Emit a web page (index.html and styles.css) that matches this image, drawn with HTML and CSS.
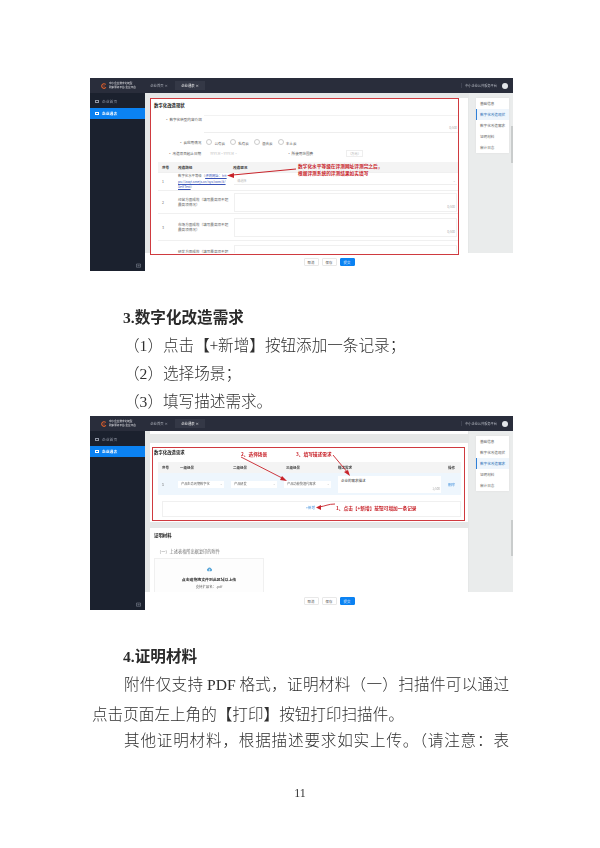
FILE: index.html
```html
<!DOCTYPE html>
<html lang="zh-CN">
<head>
<meta charset="utf-8">
<title>数字化改造需求</title>
<link rel="stylesheet" href="styles.css">
</head>
<body>
<main class="page">

<section class="shot">
  <header class="top">
    <div class="brand"><svg class="logo" viewBox="0 0 10 10"><circle cx="5" cy="5" r="3.8" fill="none" stroke="#e2602a" stroke-width="1.8" stroke-dasharray="17 7" transform="rotate(35 5 5)"/><circle cx="5" cy="5" r="1.2" fill="#b5452a"/></svg><div class="brand-t"><span>中小企业数字化转型</span><span>政策服务平台-企业平台</span></div></div>
    <div class="tab">企业首页 ×</div><div class="tab on">企业通表 ×</div>
    <div class="top-r">中小企业公共服务平台</div><div class="ava"></div>
  </header>
  <div class="body">
    <aside class="side">
      <div class="side-i"><span class="ic"></span>企业首页</div><div class="side-i on"><span class="ic"></span>企业通表</div>
      <div class="side-f"><svg class="ic-f" viewBox="0 0 10 10"><path d="M1 2H9V8.5H1ZM3 5.2H6.5M5.2 4 6.6 5.2 5.2 6.4" fill="none" stroke="#8f95a3"/></svg></div>
    </aside>
    <div class="work">
      <div class="canvas">
        <div class="scroll">
          <div class="card c1">
            <h3 class="ttl">数字化改造现状</h3>
            <div class="f-desc"><span class="lab">· 数字化转型内容介绍</span><div class="area"><span class="cnt">0/500</span></div></div>
            <div class="f-radio"><span class="lab">· 云应用情况</span><span class="rd">公有云</span><span class="rd">私有云</span><span class="rd">混合云</span><span class="rd">本土云</span></div>
            <div class="f-date"><span class="lab">· 改造项目起止日期</span><span class="dt">YYYY-M ~ YYYY-M ▫</span><span class="lab2">· 所使用范围费</span><span class="unit">（万元）</span></div>
            <div class="t1 thead"><span>序号</span><span>改造路径</span><span>改造现况</span></div>
            <div class="t1 r1"><span>1</span><span>数字化水平等级（<u>评测网址：htt ps://zxqt.smejs.cn/sys/com/#/ SelfTest</u>）</span><div class="sel">请选择<i>⌄</i></div></div>
            <div class="t1 r2"><span>2</span><span>经营方面成效（填写最高项不超最高项情况）</span><div class="area2"><span class="cnt">0/500</span></div></div>
            <div class="t1 r3"><span>3</span><span>市场方面成效（填写最高项不超最高项情况）</span><div class="area2"><span class="cnt">0/500</span></div></div>
            <div class="t1 r4"><span>4</span><span>研发方面成效（填写最高项不超最高项情况）</span><div class="area2"></div></div>
          </div>
        </div>
        <nav class="rail"><div class="toc"><a>基础信息</a><a class="on">数字化改造现状</a><a>数字化改造需求</a><a>证明材料</a><a>审计日志</a></div><div class="bar b1"></div></nav>
      </div>
      <footer class="foot"><button class="btn">取消</button><button class="btn">保存</button><button class="btn pri">提交</button></footer>
    </div>
  </div>
  <div class="red r-a"></div>
  <svg class="ann" viewBox="0 0 423 193"><path d="M206 91 140 97.2" stroke="#c8232a" stroke-width="1.1" fill="none"/><path d="M137 97.5 144 95 144 100Z" fill="#c8232a"/></svg>
  <div class="note n1">数字化水平等级在评测网址评测完之后，<br>根据评测系统的评测结果如实填写</div>
</section>

<h2 class="hd"><b>3.</b>数字化改造需求</h2>
<p class="ln">（<span class="la">1</span>）点击【+新增】按钮添加一条记录；</p>
<p class="ln">（<span class="la">2</span>）选择场景；</p>
<p class="ln">（<span class="la">3</span>）填写描述需求。</p>

<section class="shot s2">
  <header class="top">
    <div class="brand"><svg class="logo" viewBox="0 0 10 10"><circle cx="5" cy="5" r="3.8" fill="none" stroke="#e2602a" stroke-width="1.8" stroke-dasharray="17 7" transform="rotate(35 5 5)"/><circle cx="5" cy="5" r="1.2" fill="#b5452a"/></svg><div class="brand-t"><span>中小企业数字化转型</span><span>政策服务平台-企业平台</span></div></div>
    <div class="tab">企业首页 ×</div><div class="tab on">企业通表 ×</div>
    <div class="top-r">中小企业公共服务平台</div><div class="ava"></div>
  </header>
  <div class="body">
    <aside class="side">
      <div class="side-i"><span class="ic"></span>企业首页</div><div class="side-i on"><span class="ic"></span>企业通表</div>
      <div class="side-f"><svg class="ic-f" viewBox="0 0 10 10"><path d="M1 2H9V8.5H1ZM3 5.2H6.5M5.2 4 6.6 5.2 5.2 6.4" fill="none" stroke="#8f95a3"/></svg></div>
    </aside>
    <div class="work">
      <div class="canvas">
        <div class="scroll">
          <div class="stub"></div>
          <div class="card c2">
            <h3 class="ttl">数字化改造需求</h3>
            <div class="t2 thead"><span>序号</span><span>一级场景</span><span>二级场景</span><span>三级场景</span><span>描述需求</span><span>操作</span></div>
            <div class="t2 row"><span>1</span><div class="sel">产品生命周期数字化<i>⌄</i></div><div class="sel">产品研发<i>⌄</i></div><div class="sel">产品功能快速代需求<i>⌄</i></div><div class="ta">企业的需求描述<span class="cnt">1/500</span></div><span class="link">删除</span></div>
            <div class="addrow"><span class="link">+新增</span></div>
          </div>
          <div class="card c3">
            <h3 class="ttl">证明材料</h3>
            <p class="sub">（一）上述表格所出据复印的附件</p>
            <div class="upl">
              <svg class="upi" viewBox="0 0 10 10"><path d="M2.6 7.4A2 2 0 0 1 2.8 3.6 2.5 2.5 0 0 1 7.6 4 1.8 1.8 0 0 1 7.4 7.4Z" fill="#59a6d8"/><path d="M5 8V4.6M3.8 5.8 5 4.6 6.2 5.8" stroke="#fff" stroke-width=".7" fill="none"/></svg>
              <b>点击或拖拽文件到此区域以上传</b><span>支持扩展名：.pdf</span>
            </div>
          </div>
        </div>
        <nav class="rail"><div class="toc"><a>基础信息</a><a>数字化改造现状</a><a class="on">数字化改造需求</a><a>证明材料</a><a>审计日志</a></div><div class="bar b2"></div></nav>
      </div>
      <footer class="foot"><button class="btn">取消</button><button class="btn">保存</button><button class="btn pri">提交</button></footer>
    </div>
  </div>
  <div class="red r-b"></div>
  <svg class="ann" viewBox="0 0 423 194"><g stroke="#c8232a" stroke-width=".9" fill="none"><path d="M151 41 194 63"/><path d="M243 39 258 57"/><path d="M245 88C238 88 236 90 229 91"/></g><g fill="#c8232a"><path d="M197 65 190 64 192 60Z"/><path d="M260 60 254 56 258 54Z"/><path d="M226 91.5 231 89 231 94Z"/></g></svg>
  <div class="note n2">2、选择场景</div>
  <div class="note n3">3、填写描述需求</div>
  <div class="note n4">1、点击【+新增】按钮可增加一条记录</div>
</section>

<h2 class="hd after"><b>4.</b>证明材料</h2>
<p class="ln just">附件仅支持 <span class="la">PDF</span> 格式，证明材料（一）扫描件可以通过点击页面左上角的【打印】按钮打印扫描件。</p>
<p class="ln last">其他证明材料，根据描述要求如实上传。（请注意：表</p>
<div class="num">11</div>
</main>
</body>
</html>
```
FILE: styles.css
```css
* { box-sizing: border-box; }
html, body { margin: 0; padding: 0; background: #fff; }
body { font-family: "Noto Sans CJK SC", "Liberation Sans", sans-serif; color: #333; }
.page { width: 600px; height: 848px; padding: 78px 91px 0 92px; overflow: hidden; }

/* document text */
.hd, .ln { margin: 0; height: 28px; line-height: 28px; font-size: 15.6px; filter: blur(.25px); }
.hd { margin-top: 31px; margin-left: 31px; font-weight: 700; color: #2a2a2a; }
.hd b { font-family: "Liberation Serif", serif; }
.hd.after { margin-top: 31px; }
.ln { text-indent: 32px; font-weight: 300; color: #303030; }
.la { font-family: "Liberation Serif", serif; }
.just { height: 56px; text-align: justify; }
.last { text-align: justify; text-align-last: justify; }
.num { margin-top: 30px; margin-left: -1px; text-align: center; font: 12px/20px "Liberation Serif", serif; color: #333; filter: blur(.25px); }

/* screenshots */
.shot { position: relative; width: 423px; height: 193px; margin-left: -2px; display: flex; flex-direction: column; font-size: 4px; line-height: 5px; filter: blur(.45px); overflow: hidden; }
.s2 { height: 194px; margin-top: 2px; }
.top { flex: 0 0 15px; display: flex; align-items: center; background: #292d3b; color: #d5d8de; }
.brand { width: 55px; display: flex; align-items: center; gap: 2px; padding-left: 11px; }
.logo { width: 6px; height: 6px; flex: none; }
.brand-t { display: flex; flex-direction: column; font-size: 2.6px; line-height: 3.2px; white-space: nowrap; color: #e8e8ec; }
.tab { flex: 0 0 24px; height: 9px; line-height: 9px; margin-left: 2px; text-align: center; font-size: 3.4px; color: #aeb2bc; white-space: nowrap; }
.tab.on { flex-basis: 30px; margin-left: 4px; background: #343846; color: #f0f0f0; }
.top-r { margin-left: auto; font-size: 3.2px; color: #b7bbc4; padding-left: 3px; border-left: 1px solid #3d4150; white-space: nowrap; }
.ava { width: 6px; height: 6px; margin: 0 5px 0 5px; border-radius: 50%; background: #e3e6ea; }

.body { flex: 1; min-height: 0; display: flex; }
.side { flex: 0 0 55px; display: flex; flex-direction: column; padding-top: 3px; background: #1b212e; color: #8f95a3; font-size: 3.8px; }
.side-i { display: flex; align-items: center; height: 11px; padding-left: 5px; margin-bottom: 1px; }
.ic { width: 4px; height: 3.5px; margin-right: 3px; border: .5px solid currentColor; }
.side-i.on { background: #0b82f2; color: #fff; font-weight: 700; }
.side-f { margin-top: auto; padding: 0 4px 3px 0; display: flex; justify-content: flex-end; }
.ic-f { width: 5px; height: 5px; }
.work { flex: 1; min-width: 0; display: flex; flex-direction: column; }
.canvas { flex: 1; min-height: 0; display: flex; background: #e5e7e7; }
.scroll { flex: 0 0 324px; padding: 5px 1px 0 5px; overflow: hidden; }
.card { background: #fff; }
.ttl { margin: 0; font-size: 4.4px; line-height: 6px; font-weight: 700; color: #222; }

.foot { flex: 0 0 18px; display: flex; align-items: center; justify-content: center; gap: 3px; background: #fff; }
.btn { width: 15px; height: 8px; padding: 0; border: 1px solid #e8e8e8; border-radius: 1px; background: #fff; font: 3.4px/5px "Noto Sans CJK SC", sans-serif; color: #555; }
.btn.pri { background: #0b82f2; border-color: #0b82f2; color: #fff; }

.rail { flex: 1; position: relative; padding: 5px 4px 0 7px; background: #eaecec; }
.toc { width: 33px; height: 55px; background: #fff; box-shadow: 0 0 2px #ddd; display: flex; flex-direction: column; }
.toc a { height: 11px; line-height: 11px; padding-left: 4px; font-size: 3.6px; color: #666; white-space: nowrap; }
.toc a.on { border-left: 1px solid #2f80d8; padding-left: 3px; background: #eef5fc; color: #2c6fb5; }
.bar { position: absolute; right: 0; width: 2px; background: #c9cccc; }
.b1 { top: 33px; height: 37px; }
.b2 { top: 89px; height: 36px; }

/* first form */
.c1 { height: 170px; padding: 4px 10px 0 8px; color: #666; font-size: 3.6px; }
.c1 .ttl { margin-left: -4px; }
.lab { display: inline-block; white-space: nowrap; color: #555; }
.f-desc { display: flex; padding-left: 7px; margin-top: 7px; height: 18px; gap: 2px; }
.f-desc .lab { padding-top: 1.5px; }
.area { position: relative; flex: 1; border-top: 1px solid #f2f2f2; border-bottom: 1px solid #eee; }
.cnt { position: absolute; right: 1px; bottom: 2px; font-size: 3px; line-height: 4px; color: #aaa; white-space: nowrap; }
.f-radio { display: flex; gap: 5px; padding-left: 21px; margin-top: 5.5px; height: 7px; align-items: center; white-space: nowrap; }
.rd::before { content: ""; display: inline-block; width: 4px; height: 4px; margin-right: 2px; vertical-align: -.5px; border: .5px solid #ccc; border-radius: 50%; }
.f-date { display: flex; align-items: center; height: 7px; margin-top: 4px; padding-left: 10px; white-space: nowrap; }
.dt { margin-left: 9px; width: 77px; color: #bbb; font-size: 3.2px; }
.lab2 { color: #555; width: 23px; }
.unit { margin-left: 36px; padding: 0 1px; border: .5px solid #eee; color: #aaa; font-size: 3.2px; }
.t1 { display: grid; grid-template-columns: 20px 55px 1fr; align-items: center; border-bottom: 1px solid #f0f0f0; }
.t1 > span:first-child { padding-left: 4px; }
.thead { margin-top: 5.5px; height: 11px; background: #f4f4f4; font-weight: 700; color: #444; }
.r1 { height: 18px; font-size: 3.4px; line-height: 5.4px; }
.r1 u { color: #3a54b8; }
.r2 { height: 23px; line-height: 5px; }
.r3 { height: 27px; line-height: 5px; }
.r4 { height: 27px; line-height: 5px; }
.t1 > span:nth-child(2) { padding-right: 2px; }
.sel { position: relative; height: 7px; line-height: 6px; padding-left: 3px; border-bottom: .5px solid #eee; color: #bbb; font-size: 3.2px; white-space: nowrap; overflow: hidden; }
.sel i { position: absolute; right: 1px; top: 0; font-style: normal; color: #999; }
.t1 .sel { margin-left: 1px; margin-right: 1px; }
.area2 { position: relative; height: 19px; margin-left: 1px; margin-right: 1px; border: .5px solid #f0f0f0; }

/* second form */
.stub { height: 3px; margin: -5px 0 9px; background: #fff; }
.c2 { height: 79px; padding: 6px 7px 0 8px; margin-top: 1px; color: #555; font-size: 3.5px; }
.c2 .ttl { margin-left: -4px; }
.t2 { display: grid; grid-template-columns: 20px 53px 53px 54px 110px 1fr; align-items: center; }
.c2 .thead { margin-top: 7px; }
.thead.t2 > span:nth-child(n+2):nth-child(-n+4) { padding-left: 2px; }
.t2 > span:first-child { padding-left: 4px; }
.row { height: 22px; background: #eef6fd; }
.row .sel { margin-right: 7px; background: #fff; border: 0; color: #666; }
.ta { position: relative; height: 17px; margin-right: 7px; padding: 2px 3px; background: #fff; color: #444; }
.link { color: #3f8fdc; }
.addrow { height: 16px; margin: 6px 0 0 4px; padding-left: 143px; line-height: 11px; border: .5px solid #f0f0f0; }
.c3 { height: 70px; margin-top: 6px; padding: 4px; color: #666; }
.sub { margin: 10px 0 4px 3px; font-size: 4.2px; line-height: 6px; color: #777; }
.upl { width: 110px; height: 40px; padding-top: 7px; display: flex; flex-direction: column; align-items: center; gap: 2px; border: .5px solid #f0f0f0; background: #fdfdfd; font-size: 3.4px; }
.upi { width: 7px; height: 7px; margin-bottom: 2px; }
.upl b { font-size: 3.9px; color: #333; }

/* annotations laid over the screenshots */
.red { position: absolute; border: 1px solid #cf3a3f; }
.r-a { left: 60px; top: 20px; width: 309px; height: 157px; }
.r-b { left: 62px; top: 31px; width: 313px; height: 74px; }
.ann { position: absolute; left: 0; top: 0; width: 423px; height: 100%; pointer-events: none; }
.note { position: absolute; font-size: 4.7px; line-height: 7px; font-weight: 700; color: #c8232a; white-space: nowrap; }
.n1 { left: 208px; top: 85px; }
.n2 { left: 151px; top: 34.5px; }
.n3 { left: 206px; top: 34.5px; }
.n4 { left: 246px; top: 89px; }
```
